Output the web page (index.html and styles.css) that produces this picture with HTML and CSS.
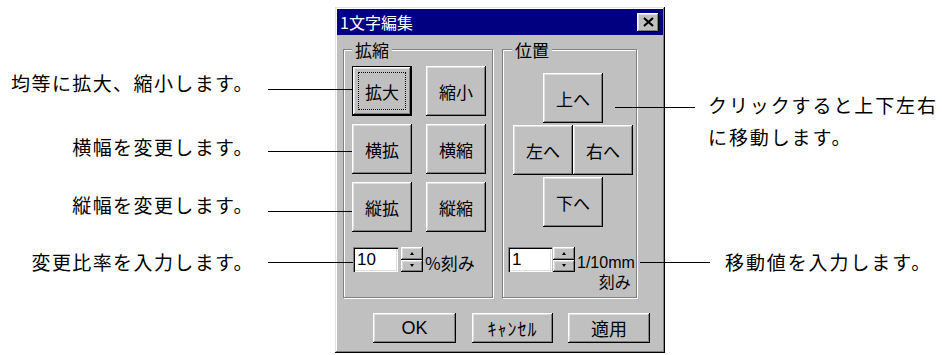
FILE: index.html
```html
<!DOCTYPE html>
<html lang="ja">
<head>
<meta charset="utf-8">
<title>1文字編集</title>
<link rel="stylesheet" href="styles.css">
</head>
<body>
<div class="page">
  <div class="notes-left">
    <p class="note n1">均等に拡大、縮小します。</p>
    <p class="note n2">横幅を変更します。</p>
    <p class="note n3">縦幅を変更します。</p>
    <p class="note n4">変更比率を入力します。</p>
  </div>

  <div class="dialog">
    <div class="titlebar">
      <span class="title">1文字編集</span>
      <span class="close">
        <svg width="11" height="10" viewBox="0 0 11 10"><path d="M1 1 L10 9 M10 1 L1 9" stroke="#000" stroke-width="2.2" fill="none"/></svg>
      </span>
    </div>
    <div class="dlg-body">
      <div class="groups">
        <div class="group g-scale">
          <span class="group-label">拡縮</span>
          <div class="btn-grid">
            <span class="btn default">拡大</span>
            <span class="btn">縮小</span>
            <span class="btn">横拡</span>
            <span class="btn">横縮</span>
            <span class="btn">縦拡</span>
            <span class="btn">縦縮</span>
          </div>
          <div class="spin-row">
            <span class="edit e-scale">10</span>
            <span class="spinner"><span class="spin up"></span><span class="spin down"></span></span>
            <span class="unit">%刻み</span>
          </div>
        </div>
        <div class="group g-pos">
          <span class="group-label">位置</span>
          <div class="cross">
            <span class="btn b-up">上へ</span>
            <span class="btn b-left">左へ</span>
            <span class="btn b-right">右へ</span>
            <span class="btn b-down">下へ</span>
          </div>
          <div class="spin-row">
            <span class="edit e-pos">1</span>
            <span class="spinner"><span class="spin up"></span><span class="spin down"></span></span>
            <span class="unit unit2"><span class="u-a">1/10mm</span><span class="u-b">刻み</span></span>
          </div>
        </div>
      </div>
      <div class="actions">
        <span class="btn act a-ok">OK</span>
        <span class="btn act a-cancel">ｷｬﾝｾﾙ</span>
        <span class="btn act a-apply">適用</span>
      </div>
    </div>
  </div>

  <div class="notes-right">
    <p class="rnote r1">クリックすると上下左右<br>に移動します。</p>
    <p class="rnote r2">移動値を入力します。</p>
  </div>

  <span class="lead l1"></span>
  <span class="lead l2"></span>
  <span class="lead l3"></span>
  <span class="lead l4"></span>
  <span class="lead l5"></span>
  <span class="lead l6"></span>
</div>
</body>
</html>
```

FILE: styles.css
```css
* { box-sizing: border-box; }
html, body { margin: 0; padding: 0; background: #fff; }
body {
  font-family: "Noto Sans CJK JP", "Noto Sans", sans-serif;
  color: #000;
}
.page {
  position: relative;
  display: flex;
  align-items: flex-start;
  width: 942px;
  height: 355px;
  overflow: hidden;
  white-space: nowrap;
}

/* left notes */
.notes-left {
  flex: none;
  width: 335px;
  padding-top: 71px;
  padding-right: 81px;
  text-align: right;
}
.note {
  margin: 0;
  font-size: 19px;
  line-height: 24px;
  letter-spacing: 1.4px;
}
.n2 { margin-top: 40px; }
.n3 { margin-top: 34px; }
.n4 { margin-top: 33px; }

/* right notes */
.notes-right {
  flex: none;
  padding-top: 89px;
  padding-left: 43px;
}
.rnote {
  margin: 0;
  font-size: 19px;
  line-height: 32px;
  letter-spacing: 1.9px;
}
.r2 { margin-top: 93px; margin-left: 17px; }

/* leader lines */
.lead {
  position: absolute;
  height: 1px;
  background: #000;
  z-index: 2;
}
.l1 { left: 268px; top: 89px; width: 84px; }
.l2 { left: 268px; top: 151px; width: 84px; }
.l3 { left: 268px; top: 211px; width: 84px; }
.l4 { left: 268px; top: 262px; width: 85px; }
.l5 { left: 615px; top: 107px; width: 80px; }
.l6 { left: 640px; top: 262px; width: 70px; }

/* dialog */
.dialog {
  flex: none;
  width: 330px;
  height: 346px;
  margin-top: 7px;
  padding: 2px;
  background: #c0c0c0;
  box-shadow: inset -1px -1px 0 #000, inset 1px 1px 0 #dfdfdf,
              inset -2px -2px 0 #808080, inset 2px 2px 0 #fff;
  display: flex;
  flex-direction: column;
}
.titlebar {
  height: 26px;
  background: #000080;
  color: #fff;
  display: flex;
  align-items: center;
  justify-content: space-between;
  padding: 0 4px 0 3px;
  font-size: 16px;
}
.title { line-height: 26px; }
.close {
  width: 22px;
  height: 19px;
  background: #c0c0c0;
  display: flex;
  align-items: center;
  justify-content: center;
  box-shadow: inset -1px -1px 0 #000, inset 1px 1px 0 #fff,
              inset -2px -2px 0 #808080, inset 2px 2px 0 #dfdfdf;
}
.close svg { display: block; }

.dlg-body { padding: 14px 0 0 6px; }
.groups { display: flex; gap: 9px; }
.group {
  position: relative;
  height: 249px;
  border: 1px solid #808080;
  box-shadow: 1px 1px 0 #fff, inset 1px 1px 0 #fff;
}
.g-scale { width: 150px; padding: 16px 0 0 8px; }
.g-pos { width: 135px; padding: 23px 0 0 10px; }
.group-label {
  position: absolute;
  top: -11px;
  left: 8px;
  padding: 0 3px;
  background: #c0c0c0;
  font-size: 17px;
  line-height: 22px;
}
.g-pos .group-label { left: 9px; }

.btn {
  display: flex;
  align-items: center;
  justify-content: center;
  background: #c0c0c0;
  font-size: 17px;
  color: #000;
  box-shadow: inset -1px -1px 0 #000, inset 1px 1px 0 #fff,
              inset -2px -2px 0 #808080, inset 2px 2px 0 #dfdfdf;
}
.btn.default {
  box-shadow: inset 0 0 0 1px #000, inset -2px -2px 0 #000, inset 2px 2px 0 #fff,
              inset -3px -3px 0 #808080, inset 3px 3px 0 #dfdfdf;
  outline: 1px dotted #000;
  outline-offset: -7px;
}
.btn-grid {
  display: grid;
  grid-template-columns: 60px 60px;
  grid-auto-rows: 50px;
  column-gap: 14px;
  row-gap: 8px;
}
.cross {
  display: grid;
  grid-template-columns: repeat(4, 30px);
  grid-template-rows: repeat(3, 50px);
  row-gap: 2px;
}
.b-up { grid-column: 2 / 4; grid-row: 1; }
.b-left { grid-column: 1 / 3; grid-row: 2; }
.b-right { grid-column: 3 / 5; grid-row: 2; }
.b-down { grid-column: 2 / 4; grid-row: 3; }

.spin-row {
  display: flex;
  align-items: flex-start;
  margin-top: 15px;
  margin-left: 1px;
}
.g-pos .spin-row { margin-top: 20px; margin-left: -5px; }
.edit {
  height: 25px;
  background: #fff;
  padding-left: 4px;
  font-family: "Liberation Sans", Arial, sans-serif;
  font-size: 17px;
  line-height: 25px;
  box-shadow: inset 1px 1px 0 #808080, inset 2px 2px 0 #000,
              inset -1px -1px 0 #fff, inset -2px -2px 0 #dfdfdf;
}
.e-scale { width: 45px; margin-right: 3px; }
.e-pos { width: 44px; margin-right: 1px; }
.spinner {
  width: 22px;
  height: 25px;
  display: flex;
  flex-direction: column;
}
.spin {
  flex: 1;
  display: flex;
  align-items: center;
  justify-content: center;
  background: #c0c0c0;
  box-shadow: inset -1px -1px 0 #000, inset 1px 1px 0 #fff,
              inset -2px -2px 0 #808080, inset 2px 2px 0 #dfdfdf;
}
.spin::before {
  content: "";
  width: 0;
  height: 0;
  border-left: 2px solid transparent;
  border-right: 2px solid transparent;
}
.up::before { border-bottom: 3px solid #000; }
.down::before { border-top: 3px solid #000; }
.unit {
  margin-left: 2px;
  margin-top: 3px;
  font-size: 17px;
  line-height: 25px;
}
.unit2 {
  display: flex;
  flex-direction: column;
  align-items: flex-end;
  margin-top: 6px;
  line-height: 19px;
}
.u-a { font-family: "Liberation Sans", Arial, sans-serif; font-size: 16px; }
.u-b { padding-right: 4px; font-size: 16px; }

.actions {
  display: flex;
  gap: 15px;
  margin-top: 15px;
  padding-left: 30px;
}
.act { height: 30px; font-size: 18px; }
.a-ok { width: 83px; font-family: "Liberation Sans", Arial, sans-serif; }
.a-cancel { width: 81px; margin-left: 1px; letter-spacing: 1px; }
.a-apply { width: 82px; }
```
